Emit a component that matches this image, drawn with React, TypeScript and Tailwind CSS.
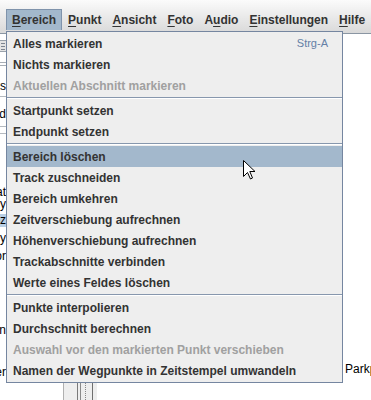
import React from "react";

type Item = { label: string; disabled?: boolean; shortcut?: string; active?: boolean } | "sep";

const items: Item[] = [
  { label: "Alles markieren", shortcut: "Strg-A" },
  { label: "Nichts markieren" },
  { label: "Aktuellen Abschnitt markieren", disabled: true },
  "sep",
  { label: "Startpunkt setzen" },
  { label: "Endpunkt setzen" },
  "sep",
  { label: "Bereich löschen", active: true },
  { label: "Track zuschneiden" },
  { label: "Bereich umkehren" },
  { label: "Zeitverschiebung aufrechnen" },
  { label: "Höhenverschiebung aufrechnen" },
  { label: "Trackabschnitte verbinden" },
  { label: "Werte eines Feldes löschen" },
  "sep",
  { label: "Punkte interpolieren" },
  { label: "Durchschnitt berechnen" },
  { label: "Auswahl vor den markierten Punkt verschieben", disabled: true },
  { label: "Namen der Wegpunkte in Zeitstempel umwandeln" },
];

const menus: [string, string, string][] = [
  ["", "B", "ereich"],
  ["", "P", "unkt"],
  ["", "A", "nsicht"],
  ["", "F", "oto"],
  ["A", "u", "dio"],
  ["", "E", "instellungen"],
  ["", "H", "ilfe"],
];

// bits of the window behind the popup, only the left 6px show
const behind: { y: number; text: string; sel?: boolean }[] = [
  { y: 80, text: "ks" },
  { y: 108, text: "nd" },
  { y: 186, text: "at" },
  { y: 198, text: "ry" },
  { y: 214, text: "iz", sel: true },
  { y: 232, text: "ry" },
  { y: 250, text: "or" },
  { y: 324, text: "en" },
  { y: 366, text: "er" },
];

export default function App() {
  return (
    <div className="relative w-[371px] h-[400px] overflow-hidden bg-white font-['Liberation_Sans',Arial,sans-serif] text-[12px]">
      {/* menu bar */}
      <div className="flex items-center h-[34px] pl-[6px] pt-[8px] pb-[2px] bg-gradient-to-b from-[#fbfbfb] to-[#d9d9d9] border-b border-[#8a96a3]">
        {menus.map(([pre, key, rest], i) => (
          <div
            key={i}
            className={`h-[21px] flex items-center font-bold text-[#333333] whitespace-nowrap ${
              i === 0 ? "px-[5px] bg-[#a3b8cc] border border-b-0 border-[#7f93ab]" : "ml-[1px] px-[5px]"
            }`}
          >
            {pre}
            <span className="underline underline-offset-[2px]">{key}</span>
            {rest}
          </div>
        ))}
      </div>

      {/* window content behind the popup */}
      <div className="absolute left-0 top-[40px] w-[6px] h-[12px] border-y border-[#9aa2ab] bg-[#e4e4e4] flex flex-col justify-center gap-[2px] px-[1px]">
        <div className="h-px bg-[#7d8590]" />
        <div className="h-px bg-[#7d8590]" />
        <div className="h-px bg-[#7d8590]" />
      </div>
      <div className="absolute left-0 top-[62px] w-[6px] h-[4px] border-y border-[#a8aeb5]" />
      <div className="absolute left-0 top-[96px] w-[6px] h-px bg-[#b5bac0]" />
      <div className="absolute left-0 top-[126px] w-[6px] h-[8px] border-y border-[#b5bac0]" />
      {behind.map((b, i) => (
        <div
          key={i}
          className={`absolute left-0 w-[6px] h-[13px] leading-[13px] overflow-hidden flex justify-end ${b.sel ? "bg-[#b8cfe5]" : ""}`}
          style={{ top: b.y }}
        >
          <span className="text-black whitespace-nowrap">{b.text}</span>
        </div>
      ))}
      <div className="absolute left-[63px] top-[383px] w-[34px] h-[17px] flex bg-[#eeeeee] border-l border-[#b0b0b0]">
        <div className="w-[13px]" />
        <div className="w-px bg-[#7a7a7a]" />
        <div className="w-[2px]" />
        <div className="w-px bg-[#8a8a8a]" />
        <div className="w-[4px]" />
        <div className="w-px border-l border-dotted border-[#888]" />
        <div className="w-[6px]" />
        <div className="w-px bg-[#6f6f6f]" />
      </div>
      <div className="absolute left-[345px] top-[360px] text-black whitespace-nowrap">Parkplatz</div>

      {/* popup menu */}
      <div className="absolute left-[6px] top-[31px] w-[337px] bg-[#eeeeee] border border-[#7586a0] py-px">
        {items.map((it, i) =>
          it === "sep" ? (
            <div key={i} className="h-[4px] flex flex-col justify-center">
              <div className="h-px bg-[#8797ad]" />
              <div className="h-px bg-white" />
            </div>
          ) : (
            <div
              key={i}
              className={`h-[21px] flex items-center justify-between pl-[6px] pr-[14px] font-bold ${
                it.active ? "bg-[#a3b8cc]" : ""
              } ${it.disabled ? "text-[#a0a0a0]" : "text-[#333333]"}`}
            >
              <span className="whitespace-nowrap">{it.label}</span>
              {it.shortcut && (
                <span className="font-normal text-[11px] text-[#6480a6]">{it.shortcut}</span>
              )}
            </div>
          )
        )}
      </div>

      {/* mouse pointer */}
      <svg className="absolute left-[243px] top-[160px]" width="13" height="20" viewBox="0 0 13 20">
        <path
          d="M0.5 0.5 L0.5 16.5 L4.5 12.5 L7.5 19 L9.5 18 L6.8 11.5 L12 11.5 Z"
          fill="white"
          stroke="black"
          strokeWidth="1"
          strokeLinejoin="miter"
        />
      </svg>
    </div>
  );
}
